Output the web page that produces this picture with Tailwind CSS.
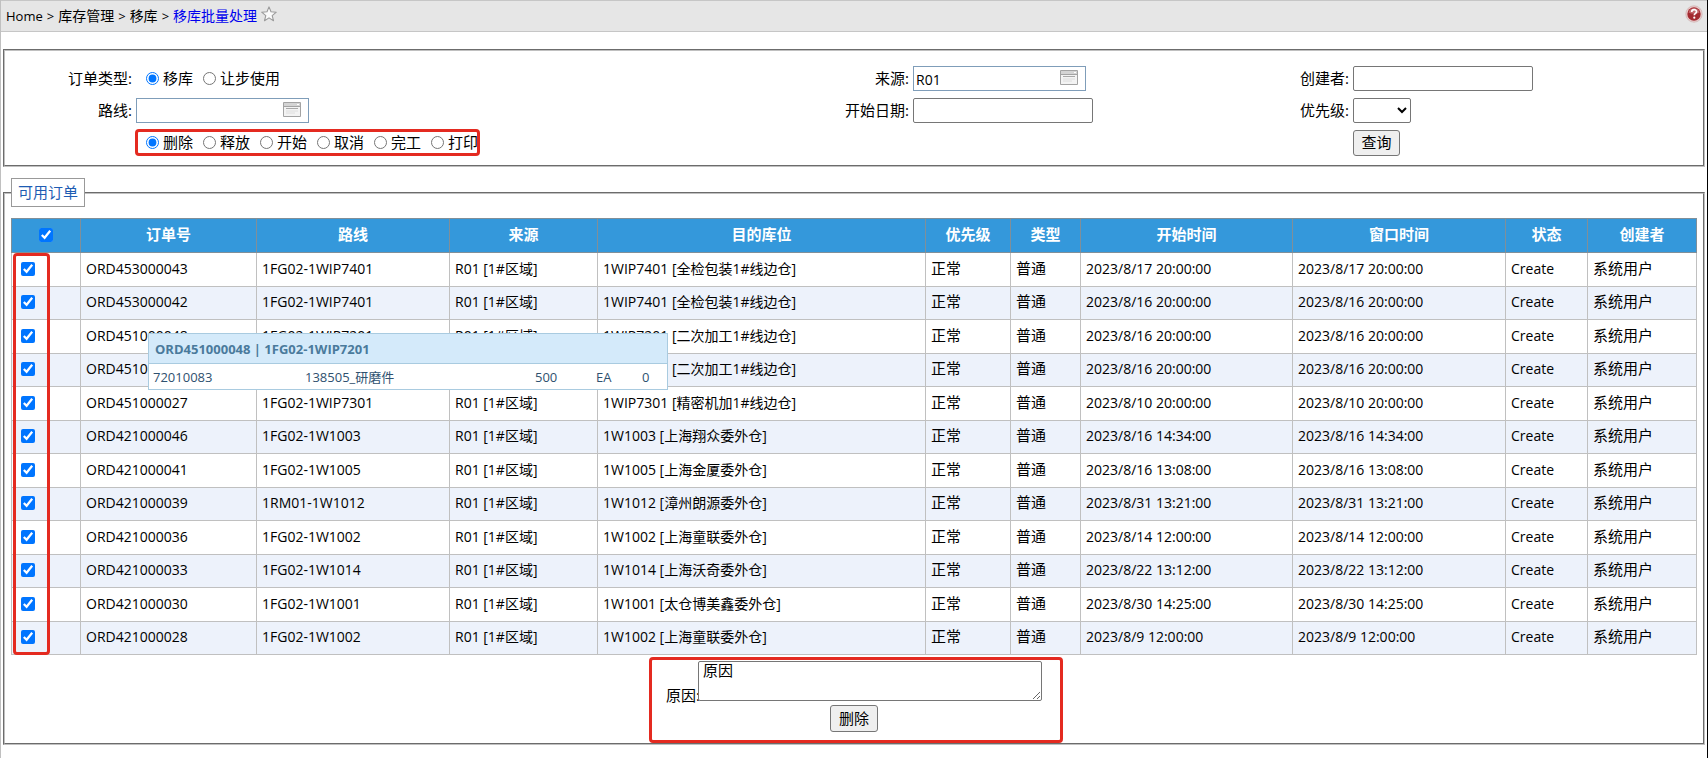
<!DOCTYPE html>
<html lang="zh-CN">
<head>
<meta charset="utf-8">
<title>移库批量处理</title>
<script src="https://cdn.jsdelivr.net/npm/@tailwindcss/browser@4"></script>
</head>
<body class="min-h-screen border-l border-r border-l-[#c0c0c0] border-r-black bg-white font-['Open_Sans','Noto_Sans_CJK_SC',sans-serif] text-sm text-black">

<header class="flex h-8 items-center justify-between border-y border-[#c6c6c6] bg-[#e6e6e6] pr-1 pl-[5px]">
  <nav class="flex items-center gap-1 text-sm leading-5" aria-label="Breadcrumb">
    <a href="#" class="text-[13px]">Home</a><span class="text-[13px]">&gt;</span>
    <a href="#">库存管理</a><span class="text-[13px]">&gt;</span>
    <a href="#">移库</a><span class="text-[13px]">&gt;</span>
    <a href="#" class="text-[#0000ee]">移库批量处理</a>
    <button type="button" aria-label="收藏" class="pb-1">
      <svg class="size-4" viewBox="0 0 16 16" fill="#fafafa" stroke="#9a9a9a" stroke-width="1.1" stroke-linejoin="round"><path d="M8 .9l2 4.9 5.3.4-4.1 3.4 1.3 5.1L8 11.9l-4.5 2.8 1.3-5.1L.7 6.2 6 5.800z"/></svg>
    </button>
  </nav>
  <button type="button" aria-label="帮助" class="mb-1">
    <svg class="size-[18px]" viewBox="0 0 18 18"><circle cx="9" cy="9" r="8.200" fill="#e9cccc" stroke="#c9a9a9" stroke-width=".6"/><circle cx="9" cy="9" r="6.700" fill="#a32a30"/><path d="M3.500 7.500a5.700 5.700 0 0 1 11 0c-3 1.600-8 1.600-11 0z" fill="#c46a6e"/><path d="M6.700 7c0-3 4.800-3 4.800-.3 0 1.700-2.200 1.700-2.200 3.500" fill="none" stroke="#fff" stroke-width="1.700"/><circle cx="9.300" cy="12.700" r="1.100" fill="#fff"/></svg>
  </button>
</header>

<main class="px-0.5">
  <fieldset class="mt-[17px] border-2 border-[#c0c0c0] [border-style:groove] pt-[15px] pb-2.5 text-[15px]">
    <form class="grid grid-cols-[minmax(0,131fr)_minmax(0,641fr)_minmax(0,136fr)_minmax(0,304fr)_minmax(0,136fr)_minmax(0,350fr)] auto-rows-[25px] items-center gap-y-[7px]">
      <span id="type" class="pr-1 text-right">订单类型:</span>
      <div role="radiogroup" aria-labelledby="type" class="flex gap-2.5 pl-2.5">
        <label class="flex items-center gap-1"><input type="radio" name="type" checked class="size-[13px]">移库</label>
        <label class="flex items-center gap-1"><input type="radio" name="type" class="size-[13px]">让步使用</label>
      </div>
      <label for="source" class="pr-1 text-right">来源:</label>
      <div class="relative h-[25px] w-[173px]">
        <input id="source" value="R01" class="size-full border border-[#7f9db9] pt-0.5 pr-9 pl-0.5 text-sm">
        <svg class="absolute top-1 right-2 h-[15px] w-[18px]" viewBox="0 0 18 15"><path d="M.5.5h17v14H.5z" fill="#f3f3f3" stroke="#a3a3a3"/><path d="M1 1h16v3H1z" fill="#d4d4d4"/><path d="M1 4.500h16" stroke="#a3a3a3"/><path d="M3 6.500h12" stroke="#a8a8a8"/><path d="M3 9h12M3 11h9" stroke="#dedede"/><path d="M14 2.500h2" stroke="#fff"/></svg>
      </div>
      <label for="creator" class="pr-1 text-right">创建者:</label>
      <input id="creator" class="h-[25px] w-[180px] rounded-xs border border-[#767676] px-0.5">

      <label for="route" class="pr-1 text-right">路线:</label>
      <div class="relative h-[25px] w-[173px]">
        <input id="route" class="size-full border border-[#7f9db9] pt-0.5 pr-9 pl-0.5 text-sm">
        <svg class="absolute top-1 right-2 h-[15px] w-[18px]" viewBox="0 0 18 15"><path d="M.5.5h17v14H.5z" fill="#f3f3f3" stroke="#a3a3a3"/><path d="M1 1h16v3H1z" fill="#d4d4d4"/><path d="M1 4.500h16" stroke="#a3a3a3"/><path d="M3 6.500h12" stroke="#a8a8a8"/><path d="M3 9h12M3 11h9" stroke="#dedede"/><path d="M14 2.500h2" stroke="#fff"/></svg>
      </div>
      <label for="start" class="pr-1 text-right">开始日期:</label>
      <input id="start" class="h-[25px] w-[180px] rounded-xs border border-[#767676] px-0.5">
      <label for="priority" class="pr-1 text-right">优先级:</label>
      <select id="priority" class="h-[25px] w-[58px] rounded-xs border border-[#767676] bg-white"><option></option><option>正常</option><option>紧急</option></select>

      <span></span>
      <div role="radiogroup" aria-label="操作" class="relative flex w-[343px] gap-2.5 pl-2.5 whitespace-nowrap">
        <label class="flex items-center gap-1"><input type="radio" name="action" checked class="size-[13px]">删除</label>
        <label class="flex items-center gap-1"><input type="radio" name="action" class="size-[13px]">释放</label>
        <label class="flex items-center gap-1"><input type="radio" name="action" class="size-[13px]">开始</label>
        <label class="flex items-center gap-1"><input type="radio" name="action" class="size-[13px]">取消</label>
        <label class="flex items-center gap-1"><input type="radio" name="action" class="size-[13px]">完工</label>
        <label class="flex items-center gap-1"><input type="radio" name="action" class="size-[13px]">打印</label>
        <span class="pointer-events-none absolute -inset-x-px -inset-y-[3px] rounded-sm border-3 border-[#e42a20]"></span>
      </div>
      <button type="submit" class="col-start-6 h-[26px] w-[47px] rounded-[3px] border border-[#767676] bg-[#efefef]">查询</button>
    </form>
  </fieldset>

  <fieldset class="mt-[11px] border-2 border-[#c0c0c0] [border-style:groove] px-1.5">
    <legend class="border border-[#999] px-[6px] py-[3px] text-[15px] leading-[21px] text-[#1e5cb3]">可用订单</legend>
    <div class="relative pt-[11px]">
      <table class="w-full table-fixed border-collapse border border-[#c0c0c0] whitespace-nowrap">
        <colgroup>
          <col class="w-[69px]"><col class="w-[176px]"><col class="w-[193px]"><col class="w-[148px]"><col class="w-[328px]"><col class="w-[85px]"><col class="w-[70px]"><col class="w-[212px]"><col class="w-[213px]"><col class="w-[82px]"><col class="w-[109px]">
        </colgroup>
        <thead>
          <tr class="h-[34px] bg-[#3498db] text-[15px] text-white *:border *:border-[#808f99] *:pb-0.5 *:font-bold">
            <th><input type="checkbox" checked aria-label="全选" class="mx-auto block size-3.5"></th>
            <th>订单号</th><th>路线</th><th>来源</th><th>目的库位</th><th>优先级</th><th>类型</th><th>开始时间</th><th>窗口时间</th><th>状态</th><th>创建者</th>
          </tr>
        </thead>
        <tbody id="orders"></tbody>
      </table>

      <div class="pointer-events-none absolute top-[46px] bottom-0 left-0.5 w-[37px] rounded-sm border-3 border-[#e42a20]"></div>

      <div role="tooltip" class="absolute top-[126px] left-[137px] w-[520px] border border-[#a9cbe0] bg-white text-[13px] text-[#2f516f]">
        <div class="h-[30px] border-b border-[#a9cbe0] bg-[#d4eafa] px-1.5 leading-[31px] font-bold text-[#4a7a9c]">ORD451000048 | 1FG02-1WIP7201</div>
        <table class="w-full table-fixed">
          <colgroup><col class="w-[152px]"><col class="w-[230px]"><col class="w-[61px]"><col class="w-[46px]"><col></colgroup>
          <tr class="h-[25px] *:pt-0.5 *:pl-1"><td>72010083</td><td>138505_研磨件</td><td>500</td><td>EA</td><td>0</td></tr>
        </table>
      </div>
    </div>

    <div class="relative mx-auto mt-1.5 flex w-[376px] flex-col items-center gap-1 pb-[11px]">
      <div class="flex items-end">
        <label for="reason" class="-mb-1 w-8 text-[15px] leading-5 whitespace-nowrap">原因:</label>
        <textarea id="reason" class="block h-10 w-[344px] resize rounded-xs border border-[#767676] bg-white px-1 py-px font-['Liberation_Mono','Noto_Sans_CJK_SC',monospace] text-[15px] leading-5">原因</textarea>
      </div>
      <button type="button" class="h-[27px] w-12 rounded-[3px] border border-[#767676] bg-[#efefef] text-[15px]">删除</button>
      <span class="pointer-events-none absolute -top-1 -right-[21px] bottom-0 -left-[17px] rounded-sm border-3 border-[#e42a20]"></span>
    </div>
  </fieldset>
</main>

<script>
  const orders = [
    ['ORD453000043', '1FG02-1WIP7401', '1WIP7401 [全检包装1#线边仓]', '2023/8/17 20:00:00'],
    ['ORD453000042', '1FG02-1WIP7401', '1WIP7401 [全检包装1#线边仓]', '2023/8/16 20:00:00'],
    ['ORD451000048', '1FG02-1WIP7201', '1WIP7201 [二次加工1#线边仓]', '2023/8/16 20:00:00'],
    ['ORD451000047', '1FG02-1WIP7201', '1WIP7201 [二次加工1#线边仓]', '2023/8/16 20:00:00'],
    ['ORD451000027', '1FG02-1WIP7301', '1WIP7301 [精密机加1#线边仓]', '2023/8/10 20:00:00'],
    ['ORD421000046', '1FG02-1W1003', '1W1003 [上海翔众委外仓]', '2023/8/16 14:34:00'],
    ['ORD421000041', '1FG02-1W1005', '1W1005 [上海金厦委外仓]', '2023/8/16 13:08:00'],
    ['ORD421000039', '1RM01-1W1012', '1W1012 [漳州朗源委外仓]', '2023/8/31 13:21:00'],
    ['ORD421000036', '1FG02-1W1002', '1W1002 [上海童联委外仓]', '2023/8/14 12:00:00'],
    ['ORD421000033', '1FG02-1W1014', '1W1014 [上海沃奇委外仓]', '2023/8/22 13:12:00'],
    ['ORD421000030', '1FG02-1W1001', '1W1001 [太仓博美鑫委外仓]', '2023/8/30 14:25:00'],
    ['ORD421000028', '1FG02-1W1002', '1W1002 [上海童联委外仓]', '2023/8/9 12:00:00'],
  ];
  document.getElementById('orders').innerHTML = orders.map(([no, route, target, time]) => `
    <tr class="odd:h-[34px] even:h-[33px] even:bg-[#edf2fb] *:border *:border-[#c0c0c0] *:px-[5px] *:pb-0.5">
      <td><input type="checkbox" checked aria-label="${no}" class="ml-1 block size-3.5"></td>
      <td>${no}</td><td>${route}</td><td>R01 [1#区域]</td><td>${target}</td>
      <td class="text-[15px]">正常</td><td class="text-[15px]">普通</td>
      <td>${time}</td><td>${time}</td><td>Create</td><td class="text-[15px]">系统用户</td>
    </tr>`).join('');
</script>
</body>
</html>
